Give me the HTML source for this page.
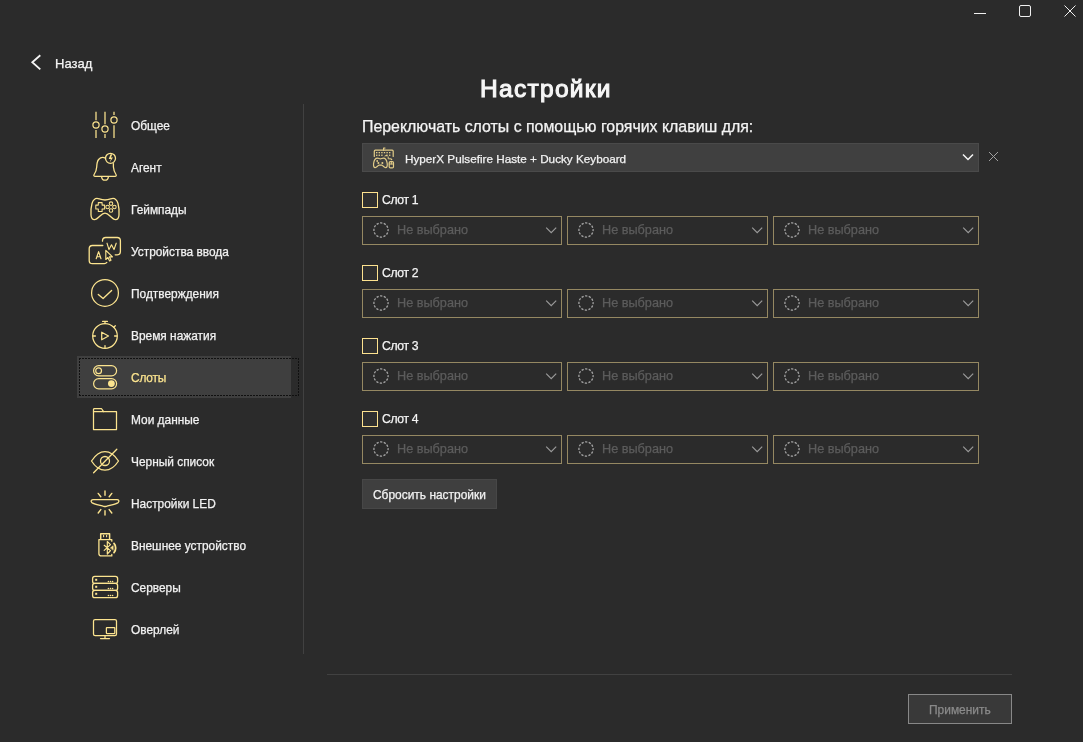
<!DOCTYPE html>
<html><head><meta charset="utf-8">
<style>
*{margin:0;padding:0;box-sizing:border-box}
html,body{width:1083px;height:742px;overflow:hidden;background:#2b2b2b}
body{position:relative;font-family:"Liberation Sans",sans-serif;color:#fff}
.t,.lbl,.sl,.ph{will-change:transform;-webkit-text-stroke:0.25px currentColor}
.a{position:absolute}
.t{position:absolute;white-space:nowrap;line-height:1}
svg{position:absolute;overflow:visible}
.lbl{position:absolute;left:131px;font-size:11.9px;white-space:nowrap;line-height:1;color:#f2f2f2}
.ic{stroke:#e6cf86;fill:none;stroke-width:1.3}
.dd{position:absolute;height:29px;border:1px solid #958862}
.dd .ph{position:absolute;left:34px;top:7px;font-size:12.7px;color:#5c5c5c;line-height:1;white-space:nowrap}
.cb{position:absolute;left:362px;width:16px;height:16px;border:1.5px solid #fde28f;background:#2f2f2f}
.sl{position:absolute;left:382px;font-size:12.2px;letter-spacing:-0.35px;line-height:1;white-space:nowrap;color:#f4f4f4}
</style></head><body>

<!-- window controls -->
<div class="a" style="left:974px;top:13px;width:12px;height:1px;background:#f0f0f0"></div>
<div class="a" style="left:1019px;top:5px;width:12px;height:12px;border:1px solid #f0f0f0;border-radius:2px"></div>
<svg style="left:1064px;top:5px" width="12" height="12"><path d="M0.5 0.5L11.5 11.5M11.5 0.5L0.5 11.5" stroke="#f0f0f0" stroke-width="1"/></svg>

<!-- back -->
<svg style="left:31px;top:54px" width="12" height="17"><path d="M9.3 1.2L1.3 8.2L9.3 15.3" stroke="#f4f4f4" stroke-width="1.8" fill="none"/></svg>
<div class="t" style="left:55px;top:57px;font-size:13px;color:#f4f4f4">Назад</div>

<!-- title -->
<div class="t" style="left:480px;top:77px;font-size:24.5px;color:#f6f6f6;-webkit-text-stroke:1.1px #f6f6f6;letter-spacing:1.3px">Настройки</div>

<!-- sidebar divider -->
<div class="a" style="left:303px;top:104px;width:1px;height:550px;background:#414141"></div>

<!-- selected row -->
<div class="a" style="left:77px;top:356px;width:214px;height:42px;background:#3f3f3f"></div>
<div class="a" style="left:79px;top:358px;width:220px;height:1px;background:repeating-linear-gradient(90deg,#101010 0 2px,transparent 2px 3px)"></div><div class="a" style="left:79px;top:395px;width:220px;height:1px;background:repeating-linear-gradient(90deg,#101010 0 2px,transparent 2px 3px)"></div><div class="a" style="left:79px;top:358px;width:1px;height:38px;background:repeating-linear-gradient(180deg,#101010 0 2px,transparent 2px 3px)"></div><div class="a" style="left:298px;top:358px;width:1px;height:38px;background:repeating-linear-gradient(180deg,#101010 0 2px,transparent 2px 3px)"></div>

<!-- sidebar labels -->
<div class="lbl" style="top:121px">Общее</div>
<div class="lbl" style="top:163px">Агент</div>
<div class="lbl" style="top:205px">Геймпады</div>
<div class="lbl" style="top:247px">Устройства ввода</div>
<div class="lbl" style="top:289px">Подтверждения</div>
<div class="lbl" style="top:331px">Время нажатия</div>
<div class="lbl" style="top:373px;color:#fce48f;letter-spacing:-0.2px">Слоты</div>
<div class="lbl" style="top:415px">Мои данные</div>
<div class="lbl" style="top:457px">Черный список</div>
<div class="lbl" style="top:499px">Настройки LED</div>
<div class="lbl" style="top:541px">Внешнее устройство</div>
<div class="lbl" style="top:583px">Серверы</div>
<div class="lbl" style="top:625px">Оверлей</div>

<svg style="left:0;top:0" width="1083" height="742" viewBox="0 0 1083 742">
<g stroke="#fce48f" fill="none" stroke-width="1.3" stroke-linecap="round" stroke-linejoin="round">
<!-- Общее: sliders -->
<g stroke-linecap="butt" stroke-width="1.25" stroke="#fce48f">
<path d="M96 111.8V120.2M96 130V138M105 111.8V124.2M105 134V138M114 111.8V115M114 125.2V138"/>
</g>
<circle cx="96" cy="125" r="3.1" stroke-width="1.2"/>
<circle cx="105" cy="129" r="3.1" stroke-width="1.2"/>
<circle cx="114" cy="120" r="3.1" stroke-width="1.2"/>
<!-- Агент: bell -->
<path d="M105.6 158.2C103.5 157 100.5 157.2 98.6 159.5C97.1 161.4 96.8 164 96.7 167C96.5 170.5 95.5 172.5 94.1 174.5C93.5 175.4 93.9 176.4 95.1 176.4H115C116.2 176.4 116.6 175.4 116 174.5C114.6 172.5 113.7 170.5 113.4 167V163.6"/>
<path d="M101.6 176.8C101.9 179 103.2 180.2 105 180.2C106.8 180.2 108.1 179 108.4 176.8"/>
<circle cx="110.5" cy="158.3" r="5"/>

<!-- Геймпады -->
<path d="M97 198.4C94.5 198.4 93 200.5 92 203.5C91 207 90.8 211.5 91 215C91.2 218 92.5 219.6 94.5 219.6C96.5 219.6 98 218 100 216C102 214 103.5 213.1 105 213.1C106.5 213.1 108 214 110 216C112 218 113.5 219.6 115.5 219.6C117.5 219.6 118.8 218 119 215C119.2 211.5 119 207 118 203.5C117 200.5 115.5 198.4 113 198.4C111 198.4 109.5 200 105 200C100.5 200 99 198.4 97 198.4Z"/>
<path d="M98.3 202.6h3.8v2.5h2.5v3.8h-2.5v2.5h-3.8v-2.5h-2.5v-3.8h2.5z" stroke-width="1.05"/>
<circle cx="111" cy="203.6" r="1.75" stroke-width="1.05"/>
<circle cx="111" cy="210.4" r="1.75" stroke-width="1.05"/>
<circle cx="107.6" cy="207" r="1.75" stroke-width="1.05"/>
<circle cx="114.4" cy="207" r="1.75" stroke-width="1.05"/>
<!-- Устройства ввода -->
<path d="M102.5 241.2V240.7C102.5 238.7 103.8 237.5 105.8 237.5H117.2C119.2 237.5 120.4 238.7 120.4 240.7V251.6C120.4 253.6 119.2 254.8 117.2 254.8H115.2"/>
<path d="M102.8 245.5H92.4C90.4 245.5 89.2 246.7 89.2 248.7V260.4C89.2 262.4 90.4 263.6 92.4 263.6H104.5C105.6 263.6 106.2 263.2 106.8 262.4"/>
<path d="M96.2 258.7L98.6 251.6L101 258.7M96.9 256.7H100.3" stroke-width="1.15"/>
<path d="M107 243.2L109 249.6L111.5 244.8L114 249.6L116.2 243.2" stroke-width="1.15"/>
<path d="M105.8 250.4V259.5L107.9 257.5L109.6 261L111 260.3L109.4 256.8H112.5Z" stroke-width="1.15"/>
<!-- Подтверждения -->
<circle cx="105" cy="292.9" r="13.4" stroke-width="1.25"/>
<path d="M98.3 294.4L103.1 298.6L111.6 290.4" stroke-width="1.35"/>
<!-- Время нажатия -->
<circle cx="105" cy="336" r="12.3" stroke-width="1.25"/>
<path d="M102.6 321.4H107.4M105 321.6V323.5M113.8 327.2L115.3 325.7M93.2 336H95.4M114.6 336H116.8M105 345.6V347.8" stroke-width="1.3"/>
<path d="M101.7 332.2L108.5 336L101.7 339.8Z" stroke-width="1.25"/>
<!-- Слоты (selected) -->
<g stroke="#fce48f">
<rect x="93.6" y="365.6" width="23" height="10.2" rx="5.1" stroke-width="1.2"/>
<rect x="93.6" y="378.6" width="23" height="10.2" rx="5.1" stroke-width="1.2"/>
<circle cx="98.6" cy="370.7" r="2.9" stroke-width="1.2"/>
<circle cx="111.4" cy="383.6" r="3.4" fill="#fce48f" stroke="none"/>
</g>
<!-- Мои данные -->
<path d="M93.5 409.3V429.5H116.5V411.7H103.6L101.4 408.5H94.3Z" stroke-width="1.25"/>
<path d="M93.5 411.7H103.6" stroke-width="1.25"/>
<!-- Черный список -->
<path d="M91.5 461C95 455.5 100 451.6 105 451.6C110 451.6 115 455.5 118.5 461C115 466.5 110 470.2 105 470.2C100 470.2 95 466.5 91.5 461Z"/>
<circle cx="105" cy="461" r="4.5"/>
<path d="M93.6 472.8L116.8 449.2"/>
<!-- Настройки LED -->
<path d="M93.5 499.6H117C118.8 499.6 119.5 501.2 118.3 502.4C116.5 504 111 505 106.3 506.3C105.4 506.6 104.6 506.6 103.7 506.3C99 505 93.5 504 91.7 502.4C90.5 501.2 91.2 499.6 93.5 499.6Z"/>
<path d="M105 491V495.2M98.2 493.4L100.8 496.8M111.8 493.4L109.2 496.8M105 510.8V515M98.2 513L100.8 509.6M111.8 513L109.2 509.6" stroke-width="1.4"/>
<!-- Внешнее устройство -->
<path d="M100.7 538.8V533.8H109.6V538.8" stroke-width="1.5" stroke="#fce48f"/>
<path d="M103.6 535.3V536.8M106.6 535.3V536.8" stroke-width="1.1"/>
<path d="M111.8 541.2V539.6H98.9V553.4C98.9 555 99.8 555.9 101.4 555.9H111.8V554.5" stroke-width="1.3"/>
<path d="M104.2 545.3L110.5 550.6L107.3 554V541.5L110.5 544.6L104.2 550.4" stroke-width="1.2"/>
<path d="M110.5 547.8L113.2 545.6V549.9Z" fill="#fce48f" stroke-width="0.5"/>
<path d="M114 543.4C116.2 545.8 116.2 550.2 114 552.6" stroke-width="1.8"/>
<!-- Серверы -->
<rect x="92.6" y="576.4" width="25" height="7" rx="2.2"/>
<rect x="92.6" y="583.4" width="25" height="7" rx="2.2"/>
<rect x="92.6" y="590.4" width="25" height="7.2" rx="2.2"/>
<!-- Оверлей -->
<rect x="93.5" y="619.5" width="23" height="16" rx="1.6" stroke-width="1.25"/>
<rect x="106.4" y="627.5" width="8.4" height="6" rx="0.5" stroke-width="1.25"/>
<path d="M105 636V638.5M100.5 638.5H109.5" stroke-width="1.25"/>
</g>
<g fill="#fce48f">
<rect x="95.2" y="578.8" width="2" height="2"/><rect x="95.2" y="585.8" width="2" height="2"/><rect x="95.2" y="592.8" width="2" height="2"/>
<circle cx="108.4" cy="581.5" r="0.8"/><circle cx="110.5" cy="581.5" r="0.8"/><circle cx="112.6" cy="581.5" r="0.8"/>
<circle cx="108.4" cy="588.5" r="0.8"/><circle cx="110.5" cy="588.5" r="0.8"/><circle cx="112.6" cy="588.5" r="0.8"/>
<circle cx="108.4" cy="595.5" r="0.8"/><circle cx="110.5" cy="595.5" r="0.8"/><circle cx="112.6" cy="595.5" r="0.8"/>
<path d="M110.6 154.2L108.7 158.9H110.9L109.7 162.4L113 157.4H110.9L112.4 154.2Z"/>
</g>
</svg>


<!-- content -->
<div class="t" style="left:362px;top:118.5px;font-size:15.9px;color:#f4f4f4">Переключать слоты с помощью горячих клавиш для:</div>

<div class="a" style="left:362px;top:143px;width:617px;height:29px;background:#404040;border:1px solid #4a4a4a"></div>
<svg style="left:0;top:0" width="1083" height="742" viewBox="0 0 1083 742">
<g stroke="#e2cc88" fill="none" stroke-width="1.2" stroke-linejoin="round" stroke-linecap="round">
<path d="M374.3 156.5V151.2C374.3 150.6 374.7 150.2 375.3 150.2H392.2C392.8 150.2 393.2 150.6 393.2 151.2V156.5"/>
<path d="M383.6 150.2V148.2L385 148"/>
<path d="M377.5 158.2C375.2 158.2 374 160.5 373.6 163.5C373.3 166 373.8 167.6 375.2 167.6C376.6 167.6 377.6 165.8 378.8 165.2H382C383.2 165.8 384.2 167.6 385.6 167.6C387 167.6 387.5 166 387.2 163.5C386.8 160.5 385.6 158.2 383.3 158.2C382 158.2 381.5 158.8 380.4 158.8C379.3 158.8 378.8 158.2 377.5 158.2Z"/>
<rect x="389.2" y="161.6" width="4.3" height="6.2" rx="1.1"/>
<path d="M391.35 161.6V164M389.2 164H393.5" stroke-width="1"/>
<path d="M388.2 157V158.8H391" stroke-width="1"/>
</g>
<g fill="#e2cc88">
<rect x="376" y="152" width="1.4" height="1.3"/><rect x="378.6" y="152" width="1.4" height="1.3"/><rect x="381.2" y="152" width="1.4" height="1.3"/><rect x="383.8" y="152" width="1.4" height="1.3"/><rect x="386.4" y="152" width="1.4" height="1.3"/><rect x="389" y="152" width="1.4" height="1.3"/>
<rect x="376" y="154.6" width="1.4" height="1.3"/><rect x="378.6" y="154.6" width="1.4" height="1.3"/><rect x="381.2" y="154.6" width="1.4" height="1.3"/><rect x="389" y="154.6" width="1.4" height="1.3"/>
<path d="M383.8 156.2L387.2 154.2L388 156.2Z"/>
<circle cx="377.2" cy="161" r="0.9"/><circle cx="378.4" cy="163" r="1"/><circle cx="382.4" cy="163" r="1"/>
<circle cx="391.5" cy="159.5" r="0.8"/>
</g>
</svg>

<div class="t" style="left:405px;top:152.5px;font-size:11.72px;color:#f2f2f2">HyperX Pulsefire Haste + Ducky Keyboard</div>
<svg style="left:962px;top:153px" width="12" height="8"><path d="M1 1.5L6 6.5L11 1.5" stroke="#f4f4f4" stroke-width="1.5" fill="none"/></svg>
<svg style="left:988px;top:151px" width="11" height="11"><path d="M1 1L10 10M10 1L1 10" stroke="#a0a0a0" stroke-width="1"/></svg>

<!-- SLOTS -->
<div class="cb" style="top:192px"></div>
<div class="sl" style="top:194px">Слот 1</div>
<div class="dd" style="left:362px;top:216px;width:200px"><div class="ph">Не выбрано</div></div>
<svg style="left:372px;top:221px" width="18" height="18"><circle cx="9" cy="9" r="7.1" stroke="#a4a4a4" stroke-width="1.3" fill="none" stroke-dasharray="2.3 1.417" stroke-dashoffset="1.15"/></svg><svg style="left:546px;top:227px" width="11" height="7"><path d="M0.2 0.6L5.2 5.6L10.2 0.6" stroke="#9a9a9a" stroke-width="1.2" fill="none"/></svg>
<div class="dd" style="left:567px;top:216px;width:201px"><div class="ph">Не выбрано</div></div>
<svg style="left:577px;top:221px" width="18" height="18"><circle cx="9" cy="9" r="7.1" stroke="#a4a4a4" stroke-width="1.3" fill="none" stroke-dasharray="2.3 1.417" stroke-dashoffset="1.15"/></svg><svg style="left:752px;top:227px" width="11" height="7"><path d="M0.2 0.6L5.2 5.6L10.2 0.6" stroke="#9a9a9a" stroke-width="1.2" fill="none"/></svg>
<div class="dd" style="left:773px;top:216px;width:206px"><div class="ph">Не выбрано</div></div>
<svg style="left:783px;top:221px" width="18" height="18"><circle cx="9" cy="9" r="7.1" stroke="#a4a4a4" stroke-width="1.3" fill="none" stroke-dasharray="2.3 1.417" stroke-dashoffset="1.15"/></svg><svg style="left:963px;top:227px" width="11" height="7"><path d="M0.2 0.6L5.2 5.6L10.2 0.6" stroke="#9a9a9a" stroke-width="1.2" fill="none"/></svg>
<div class="cb" style="top:265px"></div>
<div class="sl" style="top:267px">Слот 2</div>
<div class="dd" style="left:362px;top:289px;width:200px"><div class="ph">Не выбрано</div></div>
<svg style="left:372px;top:294px" width="18" height="18"><circle cx="9" cy="9" r="7.1" stroke="#a4a4a4" stroke-width="1.3" fill="none" stroke-dasharray="2.3 1.417" stroke-dashoffset="1.15"/></svg><svg style="left:546px;top:300px" width="11" height="7"><path d="M0.2 0.6L5.2 5.6L10.2 0.6" stroke="#9a9a9a" stroke-width="1.2" fill="none"/></svg>
<div class="dd" style="left:567px;top:289px;width:201px"><div class="ph">Не выбрано</div></div>
<svg style="left:577px;top:294px" width="18" height="18"><circle cx="9" cy="9" r="7.1" stroke="#a4a4a4" stroke-width="1.3" fill="none" stroke-dasharray="2.3 1.417" stroke-dashoffset="1.15"/></svg><svg style="left:752px;top:300px" width="11" height="7"><path d="M0.2 0.6L5.2 5.6L10.2 0.6" stroke="#9a9a9a" stroke-width="1.2" fill="none"/></svg>
<div class="dd" style="left:773px;top:289px;width:206px"><div class="ph">Не выбрано</div></div>
<svg style="left:783px;top:294px" width="18" height="18"><circle cx="9" cy="9" r="7.1" stroke="#a4a4a4" stroke-width="1.3" fill="none" stroke-dasharray="2.3 1.417" stroke-dashoffset="1.15"/></svg><svg style="left:963px;top:300px" width="11" height="7"><path d="M0.2 0.6L5.2 5.6L10.2 0.6" stroke="#9a9a9a" stroke-width="1.2" fill="none"/></svg>
<div class="cb" style="top:338px"></div>
<div class="sl" style="top:340px">Слот 3</div>
<div class="dd" style="left:362px;top:362px;width:200px"><div class="ph">Не выбрано</div></div>
<svg style="left:372px;top:367px" width="18" height="18"><circle cx="9" cy="9" r="7.1" stroke="#a4a4a4" stroke-width="1.3" fill="none" stroke-dasharray="2.3 1.417" stroke-dashoffset="1.15"/></svg><svg style="left:546px;top:373px" width="11" height="7"><path d="M0.2 0.6L5.2 5.6L10.2 0.6" stroke="#9a9a9a" stroke-width="1.2" fill="none"/></svg>
<div class="dd" style="left:567px;top:362px;width:201px"><div class="ph">Не выбрано</div></div>
<svg style="left:577px;top:367px" width="18" height="18"><circle cx="9" cy="9" r="7.1" stroke="#a4a4a4" stroke-width="1.3" fill="none" stroke-dasharray="2.3 1.417" stroke-dashoffset="1.15"/></svg><svg style="left:752px;top:373px" width="11" height="7"><path d="M0.2 0.6L5.2 5.6L10.2 0.6" stroke="#9a9a9a" stroke-width="1.2" fill="none"/></svg>
<div class="dd" style="left:773px;top:362px;width:206px"><div class="ph">Не выбрано</div></div>
<svg style="left:783px;top:367px" width="18" height="18"><circle cx="9" cy="9" r="7.1" stroke="#a4a4a4" stroke-width="1.3" fill="none" stroke-dasharray="2.3 1.417" stroke-dashoffset="1.15"/></svg><svg style="left:963px;top:373px" width="11" height="7"><path d="M0.2 0.6L5.2 5.6L10.2 0.6" stroke="#9a9a9a" stroke-width="1.2" fill="none"/></svg>
<div class="cb" style="top:411px"></div>
<div class="sl" style="top:413px">Слот 4</div>
<div class="dd" style="left:362px;top:435px;width:200px"><div class="ph">Не выбрано</div></div>
<svg style="left:372px;top:440px" width="18" height="18"><circle cx="9" cy="9" r="7.1" stroke="#a4a4a4" stroke-width="1.3" fill="none" stroke-dasharray="2.3 1.417" stroke-dashoffset="1.15"/></svg><svg style="left:546px;top:446px" width="11" height="7"><path d="M0.2 0.6L5.2 5.6L10.2 0.6" stroke="#9a9a9a" stroke-width="1.2" fill="none"/></svg>
<div class="dd" style="left:567px;top:435px;width:201px"><div class="ph">Не выбрано</div></div>
<svg style="left:577px;top:440px" width="18" height="18"><circle cx="9" cy="9" r="7.1" stroke="#a4a4a4" stroke-width="1.3" fill="none" stroke-dasharray="2.3 1.417" stroke-dashoffset="1.15"/></svg><svg style="left:752px;top:446px" width="11" height="7"><path d="M0.2 0.6L5.2 5.6L10.2 0.6" stroke="#9a9a9a" stroke-width="1.2" fill="none"/></svg>
<div class="dd" style="left:773px;top:435px;width:206px"><div class="ph">Не выбрано</div></div>
<svg style="left:783px;top:440px" width="18" height="18"><circle cx="9" cy="9" r="7.1" stroke="#a4a4a4" stroke-width="1.3" fill="none" stroke-dasharray="2.3 1.417" stroke-dashoffset="1.15"/></svg><svg style="left:963px;top:446px" width="11" height="7"><path d="M0.2 0.6L5.2 5.6L10.2 0.6" stroke="#9a9a9a" stroke-width="1.2" fill="none"/></svg>
<!-- /SLOTS -->

<div class="a" style="left:362px;top:479px;width:135px;height:30px;background:#3f3f3f;border:1px solid #474747"></div>
<div class="t" style="left:373px;top:490px;font-size:11.95px;color:#f2f2f2">Сбросить настройки</div>

<div class="a" style="left:327px;top:674px;width:685px;height:1px;background:#414141"></div>
<div class="a" style="left:908px;top:694px;width:104px;height:30px;background:#393939;border:1px solid #888"></div>
<div class="t" style="left:929px;top:705px;font-size:11.95px;color:#8a8a8a">Применить</div>

</body></html>
